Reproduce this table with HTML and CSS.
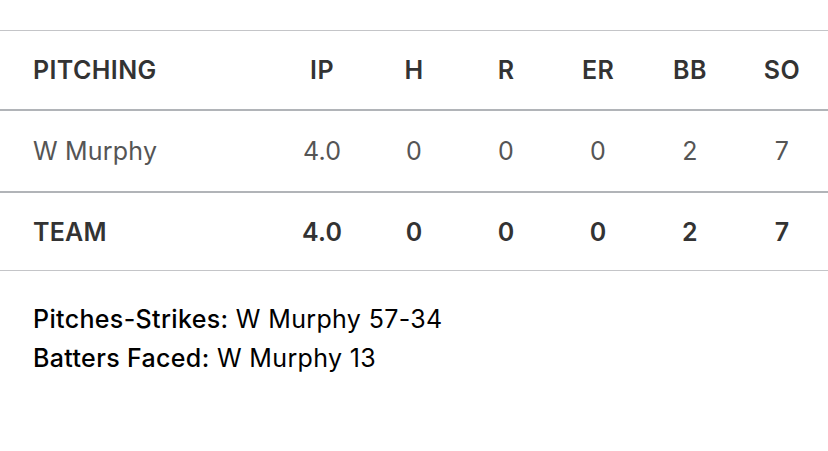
FILE: index.html
```html
<!DOCTYPE html>
<html>
<head>
<meta charset="utf-8">
<link rel="stylesheet" href="styles.css">
</head>
<body>
<div class="page">
  <table class="box">
    <thead>
      <tr class="head">
        <th class="name">PITCHING</th><th>IP</th><th>H</th><th>R</th><th>ER</th><th>BB</th><th>SO</th>
      </tr>
    </thead>
    <tbody>
      <tr class="player">
        <td class="name">W Murphy</td><td>4.0</td><td>0</td><td>0</td><td>0</td><td>2</td><td>7</td>
      </tr>
      <tr class="team">
        <td class="name">TEAM</td><td>4.0</td><td>0</td><td>0</td><td>0</td><td>2</td><td>7</td>
      </tr>
    </tbody>
  </table>
  <div class="notes">
    <p><span class="label">Pitches-Strikes:</span> W Murphy 57-34</p>
    <p><span class="label">Batters Faced:</span> W Murphy 13</p>
  </div>
</div>
</body>
</html>
```
FILE: styles.css
```css
html, body {
  margin: 0;
  padding: 0;
  background: #ffffff;
}
body {
  font-family: Inter, "Noto Sans", sans-serif;
  width: 828px;
  height: 451px;
  overflow: hidden;
}
.page {
  padding-top: 30px;
}
.box {
  width: 828px;
  border-collapse: collapse;
  table-layout: fixed;
  border-top: 1px solid #c4c5c8;
  border-bottom: 1px solid #c4c5c8;
}
.box th, .box td {
  width: 92px;
  height: 78px;
  padding: 0;
  text-align: center;
  font-size: 25px;
  letter-spacing: 0.2px;
  vertical-align: middle;
}
.box .name {
  width: 243px;
  padding-left: 33px;
  text-align: left;
}
.head th {
  font-weight: 600;
  color: #333333;
  letter-spacing: 0.4px;
  border-bottom: 2px solid #b1b4b8;
}
.player td {
  font-weight: 400;
  color: #555555;
  height: 80px;
  border-bottom: 2px solid #b1b4b8;
}
.team td {
  font-weight: 600;
  color: #333333;
  height: 77px;
}
.notes {
  padding: 29px 0 0 33px;
  font-size: 25px;
  letter-spacing: 0.35px;
  color: #000000;
}
.notes p {
  margin: 0;
  line-height: 39px;
}
.label {
  font-weight: 500;
}
```
